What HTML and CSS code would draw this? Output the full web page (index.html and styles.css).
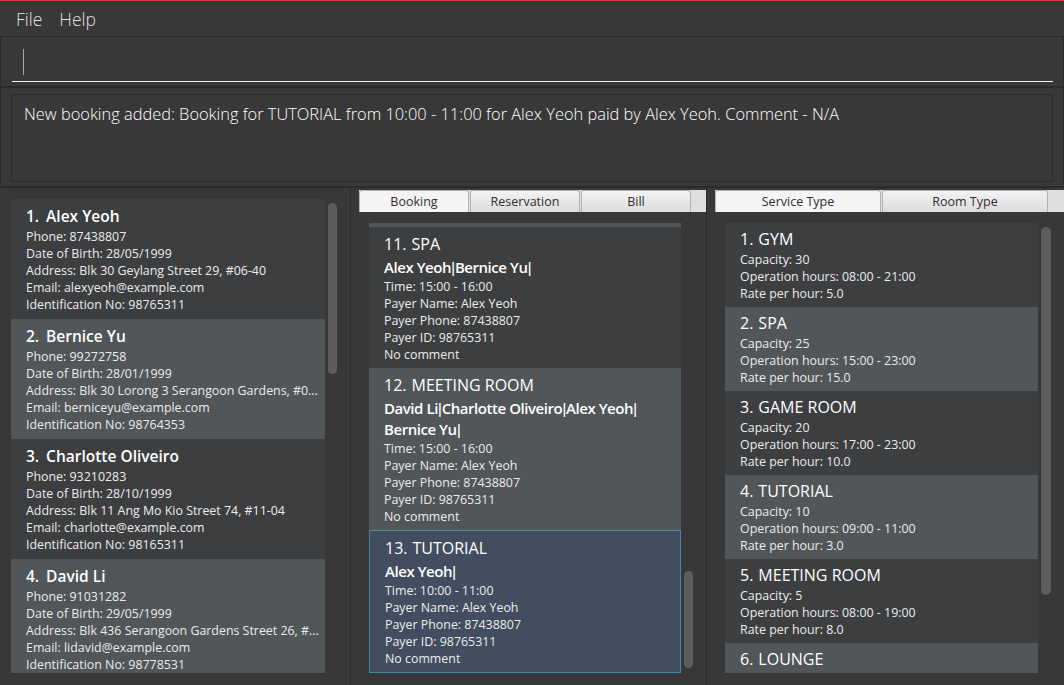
FILE: index.html
```html
<!DOCTYPE html>
<html>
<head>
<meta charset="utf-8">
<link rel="stylesheet" href="styles.css">
</head>
<body>
<div class="app">
  <div class="menubar">
    <span class="menu-item">File</span>
    <span class="menu-item">Help</span>
  </div>
  <div class="command">
    <div class="cmd-field"><span class="caret"></span></div>
  </div>
  <div class="result">
    <div class="result-box">New booking added: Booking for TUTORIAL from 10:00 - 11:00 for Alex Yeoh paid by Alex Yeoh. Comment - N/A</div>
  </div>
  <div class="main">
    <div class="panel panel-left">
      <div class="list list-persons">
        <div class="cards">
          <div class="card pcard dark">
            <div class="ctitle bold"><span class="idx">1.</span>Alex Yeoh</div>
            <div class="line">Phone: 87438807</div>
            <div class="line">Date of Birth: 28/05/1999</div>
            <div class="line">Address: Blk 30 Geylang Street 29, #06-40</div>
            <div class="line">Email: alexyeoh@example.com</div>
            <div class="line">Identification No: 98765311</div>
          </div>
          <div class="card pcard light">
            <div class="ctitle bold"><span class="idx">2.</span>Bernice Yu</div>
            <div class="line">Phone: 99272758</div>
            <div class="line">Date of Birth: 28/01/1999</div>
            <div class="line">Address: Blk 30 Lorong 3 Serangoon Gardens, #0...</div>
            <div class="line">Email: berniceyu@example.com</div>
            <div class="line">Identification No: 98764353</div>
          </div>
          <div class="card pcard dark">
            <div class="ctitle bold"><span class="idx">3.</span>Charlotte Oliveiro</div>
            <div class="line">Phone: 93210283</div>
            <div class="line">Date of Birth: 28/10/1999</div>
            <div class="line">Address: Blk 11 Ang Mo Kio Street 74, #11-04</div>
            <div class="line">Email: charlotte@example.com</div>
            <div class="line">Identification No: 98165311</div>
          </div>
          <div class="card pcard light">
            <div class="ctitle bold"><span class="idx">4.</span>David Li</div>
            <div class="line">Phone: 91031282</div>
            <div class="line">Date of Birth: 29/05/1999</div>
            <div class="line">Address: Blk 436 Serangoon Gardens Street 26, #...</div>
            <div class="line">Email: lidavid@example.com</div>
            <div class="line">Identification No: 98778531</div>
          </div>
        </div>
        <div class="scroll"><div class="thumb thumb-left"></div></div>
      </div>
    </div>
    <div class="vsep"></div>
    <div class="panel panel-mid">
      <div class="tabpane">
        <div class="tabs">
          <div class="tab tab-mid selected">Booking</div>
          <div class="tab tab-mid">Reservation</div>
          <div class="tab tab-mid">Bill</div>
        </div>
        <div class="list list-bookings">
          <div class="cards">
            <div class="peek light"></div>
            <div class="card bcard dark">
              <div class="ctitle"><span class="idx">11.</span>SPA</div>
              <div class="bnames">Alex Yeoh<span class="pipe">|</span>Bernice Yu<span class="pipe">|</span></div>
              <div class="line">Time: 15:00 - 16:00</div>
              <div class="line">Payer Name: Alex Yeoh</div>
              <div class="line">Payer Phone: 87438807</div>
              <div class="line">Payer ID: 98765311</div>
              <div class="line">No comment</div>
            </div>
            <div class="card bcard light">
              <div class="ctitle"><span class="idx">12.</span>MEETING ROOM</div>
              <div class="bnames">David Li<span class="pipe">|</span>Charlotte Oliveiro<span class="pipe">|</span>Alex Yeoh<span class="pipe">|</span><br>Bernice Yu<span class="pipe">|</span></div>
              <div class="line">Time: 15:00 - 16:00</div>
              <div class="line">Payer Name: Alex Yeoh</div>
              <div class="line">Payer Phone: 87438807</div>
              <div class="line">Payer ID: 98765311</div>
              <div class="line">No comment</div>
            </div>
            <div class="card bcard selected-card">
              <div class="ctitle"><span class="idx">13.</span>TUTORIAL</div>
              <div class="bnames">Alex Yeoh<span class="pipe">|</span></div>
              <div class="line">Time: 10:00 - 11:00</div>
              <div class="line">Payer Name: Alex Yeoh</div>
              <div class="line">Payer Phone: 87438807</div>
              <div class="line">Payer ID: 98765311</div>
              <div class="line">No comment</div>
            </div>
          </div>
          <div class="scroll"><div class="thumb thumb-mid"></div></div>
        </div>
      </div>
    </div>
    <div class="vsep"></div>
    <div class="panel panel-right">
      <div class="tabpane">
        <div class="tabs">
          <div class="tab tab-right selected">Service Type</div>
          <div class="tab tab-right">Room Type</div>
        </div>
        <div class="list list-services">
          <div class="cards">
            <div class="card scard dark">
              <div class="ctitle"><span class="idx">1.</span>GYM</div>
              <div class="line">Capacity: 30</div>
              <div class="line">Operation hours: 08:00 - 21:00</div>
              <div class="line">Rate per hour: 5.0</div>
            </div>
            <div class="card scard light">
              <div class="ctitle"><span class="idx">2.</span>SPA</div>
              <div class="line">Capacity: 25</div>
              <div class="line">Operation hours: 15:00 - 23:00</div>
              <div class="line">Rate per hour: 15.0</div>
            </div>
            <div class="card scard dark">
              <div class="ctitle"><span class="idx">3.</span>GAME ROOM</div>
              <div class="line">Capacity: 20</div>
              <div class="line">Operation hours: 17:00 - 23:00</div>
              <div class="line">Rate per hour: 10.0</div>
            </div>
            <div class="card scard light">
              <div class="ctitle"><span class="idx">4.</span>TUTORIAL</div>
              <div class="line">Capacity: 10</div>
              <div class="line">Operation hours: 09:00 - 11:00</div>
              <div class="line">Rate per hour: 3.0</div>
            </div>
            <div class="card scard dark">
              <div class="ctitle"><span class="idx">5.</span>MEETING ROOM</div>
              <div class="line">Capacity: 5</div>
              <div class="line">Operation hours: 08:00 - 19:00</div>
              <div class="line">Rate per hour: 8.0</div>
            </div>
            <div class="card scard light">
              <div class="ctitle"><span class="idx">6.</span>LOUNGE</div>
            </div>
          </div>
          <div class="scroll"><div class="thumb thumb-right"></div></div>
        </div>
      </div>
    </div>
  </div>
</div>
</body>
</html>
```
FILE: styles.css
```css
* {
  box-sizing: border-box;
  margin: 0;
  padding: 0;
}

html,
body {
  width: 1064px;
  height: 685px;
  overflow: hidden;
  background: #383838;
}

body {
  font-family: "Open Sans", "Noto Sans", sans-serif;
  color: #ffffff;
}

.app {
  height: 685px;
  display: flex;
  flex-direction: column;
  border-top: 1px solid #e23a3f;
}

/* menu bar */
.menubar {
  height: 36px;
  flex: none;
  display: flex;
  align-items: center;
  gap: 17px;
  padding-left: 16px;
  border-bottom: 1px solid #2b2b2b;
  font-size: 17.5px;
  font-weight: 300;
  color: rgba(255, 255, 255, 0.88);
}

/* command box */
.command {
  height: 50px;
  flex: none;
  padding: 0 10px 4px 11px;
  border-left: 1px solid #2b2b2b;
  border-right: 1px solid #2b2b2b;
  border-bottom: 1px solid #2b2b2b;
  display: flex;
  align-items: flex-end;
}

.cmd-field {
  flex: 1;
  height: 45px;
  border-bottom: 1px solid #f2f2f2;
  display: flex;
  align-items: flex-end;
}

.caret {
  display: block;
  width: 1px;
  height: 26px;
  margin: 0 0 6px 11px;
  background: #a8a8a8;
}

/* result display */
.result {
  height: 101px;
  flex: none;
  padding: 6px 10px 4px 10px;
  border: 1px solid #2b2b2b;
  border-bottom-width: 2px;
}

.result-box {
  height: 88px;
  border: 1px solid #2a2a2a;
  padding: 8px 12px;
  font-size: 16.4px;
  font-weight: 300;
  line-height: 22px;
  color: #ffffff;
  white-space: nowrap;
}

/* main area */
.main {
  flex: 1;
  display: grid;
  grid-template-columns: 350px 1px 355px 1px 357px;
  min-height: 0;
}

.vsep {
  background: #2c2c2c;
}

.panel {
  min-height: 0;
  overflow: hidden;
}

.panel-left {
  padding: 11px 0 0 11px;
}

.panel-mid,
.panel-right {
  padding: 2px 0 0 8px;
}

.tabpane {
  display: flex;
  flex-direction: column;
  height: 100%;
}

.tabs {
  height: 22px;
  flex: none;
  display: flex;
  gap: 1px;
  background: #dedede;
}

.tab {
  height: 22px;
  border: 1px solid #b3b3b3;
  border-bottom: none;
  border-radius: 3px 3px 0 0;
  background: linear-gradient(#f3f3f3, #dcdcdc);
  color: #2f2f2f;
  font-size: 12.5px;
  line-height: 21px;
  text-align: center;
}

.tab.selected {
  background: #f4f4f4;
}

.tab-mid {
  width: 110px;
}

.tab-right {
  width: 166px;
}

/* lists */
.list {
  display: flex;
  align-items: flex-start;
  gap: 3px;
  overflow: hidden;
}

.list-persons {
  height: 474px;
}

.list-bookings,
.list-services {
  height: 461px;
  padding: 11px 0 0 10px;
}

.cards {
  height: 100%;
  overflow: hidden;
  flex: none;
}

.list-persons .cards {
  width: 314px;
}

.list-bookings .cards {
  width: 312px;
}

.list-services .cards {
  width: 313px;
}

.scroll {
  width: 10px;
  flex: none;
}

.thumb {
  width: 9px;
  border-radius: 5px;
  background: #5d5d5d;
}

.thumb-left {
  margin-top: 4px;
  height: 171px;
}

.thumb-mid {
  margin-top: 348px;
  height: 97px;
}

.thumb-right {
  width: 10px;
  margin-top: 4px;
  height: 368px;
}

/* cards */
.dark {
  background: #3c3e3f;
}

.light {
  background: #515658;
}

.selected-card {
  background: #424d5f;
  border: 1px solid #3e8aa6;
}

.peek {
  height: 4px;
}

.card {
  overflow: hidden;
}

.pcard {
  height: 120px;
  padding: 5px 10px 6px 15px;
}

.bcard {
  padding: 5px 15px;
}

.scard {
  height: 84px;
  padding: 4px 15px 5px 15px;
}

.ctitle {
  font-size: 16px;
  line-height: 24px;
  white-space: nowrap;
  color: #ffffff;
}

.ctitle.bold {
  font-size: 15.5px;
  font-weight: 600;
}

.idx {
  margin-right: 5px;
}

.ctitle.bold .idx {
  margin-right: 7px;
}

.bnames {
  margin-top: 1px;
  font-size: 15px;
  font-weight: 600;
  line-height: 21px;
  color: #ffffff;
  letter-spacing: -0.45px;
}

.pipe {
  margin: 0 -2px;
}

.line {
  font-size: 12.4px;
  line-height: 17px;
  white-space: nowrap;
  color: #ececec;
}
```
